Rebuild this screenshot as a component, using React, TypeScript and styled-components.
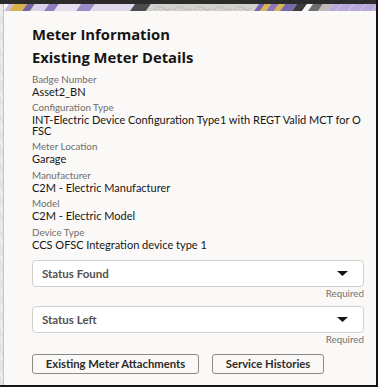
import React from "react";
import styled, { createGlobalStyle } from "styled-components";

const Global = createGlobalStyle`
  html, body { margin: 0; padding: 0; background: #ffffff; }
  body { font-family: "Lato", "Liberation Sans", sans-serif; color: #161513; }
  * { box-sizing: border-box; }
`;

const Frame = styled.div`
  width: 378px;
  height: 387px;
  display: flex;
  flex-direction: column;
  background: #faf9f8;
  border-right: 2px solid #151515;
  border-bottom: 2px solid #151515;
  overflow: hidden;
`;

const TopBar = styled.div`
  height: 4px;
  flex: none;
  background: #2b2b2b;
`;

const Main = styled.div`
  flex: 1;
  display: flex;
  min-height: 0;
`;

const LeftStrip = styled.div`
  width: 4px;
  flex: none;
  background: repeating-linear-gradient(
    45deg,
    #dcdcdc 0px,
    #dcdcdc 1px,
    #f1f1f1 1px,
    #f1f1f1 2px
  );
  border-right: 1px solid #c4c4c4;
`;

const Column = styled.div`
  flex: 1;
  display: flex;
  flex-direction: column;
  min-width: 0;
`;

const BandSvg = styled.svg`
  display: block;
  flex: none;
`;

const Content = styled.div`
  padding: 15px 12px 0 28px;
  display: flex;
  flex-direction: column;
`;

const Heading = styled.h1<{ $gap: number }>`
  margin: ${(p) => p.$gap}px 0 0;
  font-family: "Open Sans", "Liberation Sans", sans-serif;
  font-weight: 700;
  font-size: 14.8px;
  line-height: 16px;
  color: #161513;
`;

const Fields = styled.div`
  margin-top: 9.5px;
  display: flex;
  flex-direction: column;
  gap: 5.2px;
`;

const Field = styled.div`
  display: flex;
  flex-direction: column;
`;

const Label = styled.div`
  font-size: 9.8px;
  line-height: 11px;
  color: #6f6c69;
`;

const Value = styled.div`
  margin-top: 1.8px;
  font-size: 11px;
  line-height: 10.5px;
  color: #161513;
  word-break: break-all;
`;

const SelectBox = styled.div<{ $top: number }>`
  margin-top: ${(p) => p.$top}px;
  height: 27px;
  background: #ffffff;
  border: 1px solid #d3d0cc;
  border-radius: 4px;
  display: flex;
  align-items: center;
  justify-content: space-between;
  padding: 0 15px 0 9px;
`;

const SelectText = styled.span`
  font-size: 11.5px;
  font-weight: 700;
  color: #55524f;
`;

const Required = styled.div`
  margin-top: 1px;
  font-size: 9.8px;
  line-height: 10px;
  text-align: right;
  color: #75726f;
`;

const Buttons = styled.div`
  margin-top: 10px;
  display: flex;
  gap: 13px;
`;

const Button = styled.button<{ $w: number }>`
  width: ${(p) => p.$w}px;
  height: 20px;
  padding: 0;
  background: #faf9f8;
  border: 1px solid #8c8985;
  border-radius: 3px;
  font-family: "Lato", "Liberation Sans", sans-serif;
  font-weight: 700;
  font-size: 11.3px;
  color: #2d2b29;
`;

type Stripe = [number, number, string];

const stripes: Stripe[] = [
  [0, 5, "#c9bce2"],
  [5, 18, "#d8b34c"],
  [18, 26, "#76649f"],
  [26, 40, "#d9d0ea"],
  [40, 50, "#8e7ebd"],
  [50, 72, "#e4def0"],
  [72, 86, "#9b8dc7"],
  [86, 126, "#e0d9ee"],
  [126, 142, "#4c4c4c"],
  [142, 250, "#d2d0cd"],
  [250, 256, "#7a68ad"],
  [256, 262, "#d9b64a"],
  [262, 270, "#8a78b8"],
  [270, 276, "#d9b64a"],
  [276, 288, "#7b69ad"],
  [288, 298, "#3c3c3c"],
  [298, 304, "#f4f4f4"],
  [304, 314, "#6e6e6e"],
  [314, 324, "#bdbab7"],
  [324, 380, "#b9a9da"],
];

const Band: React.FC = () => (
  <BandSvg width="372" height="7" viewBox="0 0 372 7">
    {stripes.map(([a, b, c], i) => (
      <polygon key={i} points={`${a + 5},0 ${b + 5},0 ${b},7 ${a},7`} fill={c} />
    ))}
    {[150, 170, 190, 210, 230].map((x) => (
      <path key={x} d={`M${x} 6 q4 -6 9 -2 t8 0`} stroke="#b4b1ae" strokeWidth="0.8" fill="none" />
    ))}
    {[332, 344, 356, 368].map((x) => (
      <line key={x} x1={x} y1={7} x2={x + 6} y2={0} stroke="#d6cceb" strokeWidth="0.8" />
    ))}
  </BandSvg>
);

const Caret: React.FC = () => (
  <svg width="11" height="5" viewBox="0 0 11 5">
    <path d="M0 0 H11 L5.5 5 Z" fill="#161513" />
  </svg>
);

const details: [string, string][] = [
  ["Badge Number", "Asset2_BN"],
  ["Configuration Type", "INT-Electric Device Configuration Type1 with REGT Valid MCT for OFSC"],
  ["Meter Location", "Garage"],
  ["Manufacturer", "C2M - Electric Manufacturer"],
  ["Model", "C2M - Electric Model"],
  ["Device Type", "CCS OFSC Integration device type 1"],
];

export default function App() {
  return (
    <>
      <Global />
      <Frame>
        <TopBar />
        <Main>
          <LeftStrip />
          <Column>
            <Band />
            <Content>
              <Heading $gap={0}>Meter Information</Heading>
              <Heading $gap={6.5}>Existing Meter Details</Heading>
              <Fields>
                {details.map(([l, v]) => (
                  <Field key={l}>
                    <Label>{l}</Label>
                    <Value>{v}</Value>
                  </Field>
                ))}
              </Fields>
              <SelectBox $top={9.5}>
                <SelectText>Status Found</SelectText>
                <Caret />
              </SelectBox>
              <Required>Required</Required>
              <SelectBox $top={8}>
                <SelectText>Status Left</SelectText>
                <Caret />
              </SelectBox>
              <Required>Required</Required>
              <Buttons>
                <Button $w={167}>Existing Meter Attachments</Button>
                <Button $w={112}>Service Histories</Button>
              </Buttons>
            </Content>
          </Column>
        </Main>
      </Frame>
    </>
  );
}
